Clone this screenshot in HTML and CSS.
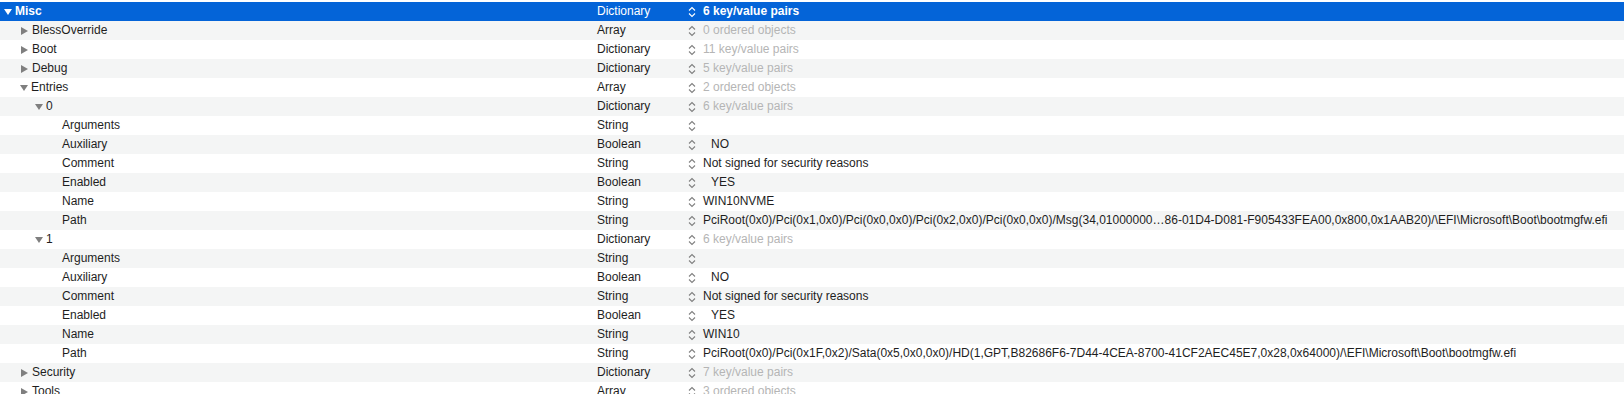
FILE: index.html
```html
<!DOCTYPE html>
<html lang="en">

<head>
    <meta charset="UTF-8">
    <title>config.plist - Misc</title>
    <link rel="stylesheet" href="styles.css">
</head>

<body>
    <div class="plist">
        <div class="row selected">
            <div class="key lvl-0"><span class="tri down"></span>Misc</div>
            <div class="type">Dictionary</div>
            <div class="stepper"><svg viewBox="0 0 8 12"><path d="M1 4.5 4 1.5 7 4.5M1 7.5 4 10.5 7 7.5"/></svg></div>
            <div class="value">6 key/value pairs</div>
        </div>
        <div class="row">
            <div class="key lvl-1"><span class="tri right"></span>BlessOverride</div>
            <div class="type">Array</div>
            <div class="stepper"><svg viewBox="0 0 8 12"><path d="M1 4.5 4 1.5 7 4.5M1 7.5 4 10.5 7 7.5"/></svg></div>
            <div class="value muted">0 ordered objects</div>
        </div>
        <div class="row">
            <div class="key lvl-1"><span class="tri right"></span>Boot</div>
            <div class="type">Dictionary</div>
            <div class="stepper"><svg viewBox="0 0 8 12"><path d="M1 4.5 4 1.5 7 4.5M1 7.5 4 10.5 7 7.5"/></svg></div>
            <div class="value muted">11 key/value pairs</div>
        </div>
        <div class="row">
            <div class="key lvl-1"><span class="tri right"></span>Debug</div>
            <div class="type">Dictionary</div>
            <div class="stepper"><svg viewBox="0 0 8 12"><path d="M1 4.5 4 1.5 7 4.5M1 7.5 4 10.5 7 7.5"/></svg></div>
            <div class="value muted">5 key/value pairs</div>
        </div>
        <div class="row">
            <div class="key lvl-1"><span class="tri down"></span>Entries</div>
            <div class="type">Array</div>
            <div class="stepper"><svg viewBox="0 0 8 12"><path d="M1 4.5 4 1.5 7 4.5M1 7.5 4 10.5 7 7.5"/></svg></div>
            <div class="value muted">2 ordered objects</div>
        </div>
        <div class="row">
            <div class="key lvl-2"><span class="tri down"></span>0</div>
            <div class="type">Dictionary</div>
            <div class="stepper"><svg viewBox="0 0 8 12"><path d="M1 4.5 4 1.5 7 4.5M1 7.5 4 10.5 7 7.5"/></svg></div>
            <div class="value muted">6 key/value pairs</div>
        </div>
        <div class="row">
            <div class="key lvl-3">Arguments</div>
            <div class="type">String</div>
            <div class="stepper"><svg viewBox="0 0 8 12"><path d="M1 4.5 4 1.5 7 4.5M1 7.5 4 10.5 7 7.5"/></svg></div>
            <div class="value"></div>
        </div>
        <div class="row">
            <div class="key lvl-3">Auxiliary</div>
            <div class="type">Boolean</div>
            <div class="stepper"><svg viewBox="0 0 8 12"><path d="M1 4.5 4 1.5 7 4.5M1 7.5 4 10.5 7 7.5"/></svg></div>
            <div class="value bool">NO</div>
        </div>
        <div class="row">
            <div class="key lvl-3">Comment</div>
            <div class="type">String</div>
            <div class="stepper"><svg viewBox="0 0 8 12"><path d="M1 4.5 4 1.5 7 4.5M1 7.5 4 10.5 7 7.5"/></svg></div>
            <div class="value">Not signed for security reasons</div>
        </div>
        <div class="row">
            <div class="key lvl-3">Enabled</div>
            <div class="type">Boolean</div>
            <div class="stepper"><svg viewBox="0 0 8 12"><path d="M1 4.5 4 1.5 7 4.5M1 7.5 4 10.5 7 7.5"/></svg></div>
            <div class="value bool">YES</div>
        </div>
        <div class="row">
            <div class="key lvl-3">Name</div>
            <div class="type">String</div>
            <div class="stepper"><svg viewBox="0 0 8 12"><path d="M1 4.5 4 1.5 7 4.5M1 7.5 4 10.5 7 7.5"/></svg></div>
            <div class="value">WIN10NVME</div>
        </div>
        <div class="row">
            <div class="key lvl-3">Path</div>
            <div class="type">String</div>
            <div class="stepper"><svg viewBox="0 0 8 12"><path d="M1 4.5 4 1.5 7 4.5M1 7.5 4 10.5 7 7.5"/></svg></div>
            <div class="value">PciRoot(0x0)/Pci(0x1,0x0)/Pci(0x0,0x0)/Pci(0x2,0x0)/Pci(0x0,0x0)/Msg(34,01000000…86-01D4-D081-F905433FEA00,0x800,0x1AAB20)/\EFI\Microsoft\Boot\bootmgfw.efi</div>
        </div>
        <div class="row">
            <div class="key lvl-2"><span class="tri down"></span>1</div>
            <div class="type">Dictionary</div>
            <div class="stepper"><svg viewBox="0 0 8 12"><path d="M1 4.5 4 1.5 7 4.5M1 7.5 4 10.5 7 7.5"/></svg></div>
            <div class="value muted">6 key/value pairs</div>
        </div>
        <div class="row">
            <div class="key lvl-3">Arguments</div>
            <div class="type">String</div>
            <div class="stepper"><svg viewBox="0 0 8 12"><path d="M1 4.5 4 1.5 7 4.5M1 7.5 4 10.5 7 7.5"/></svg></div>
            <div class="value"></div>
        </div>
        <div class="row">
            <div class="key lvl-3">Auxiliary</div>
            <div class="type">Boolean</div>
            <div class="stepper"><svg viewBox="0 0 8 12"><path d="M1 4.5 4 1.5 7 4.5M1 7.5 4 10.5 7 7.5"/></svg></div>
            <div class="value bool">NO</div>
        </div>
        <div class="row">
            <div class="key lvl-3">Comment</div>
            <div class="type">String</div>
            <div class="stepper"><svg viewBox="0 0 8 12"><path d="M1 4.5 4 1.5 7 4.5M1 7.5 4 10.5 7 7.5"/></svg></div>
            <div class="value">Not signed for security reasons</div>
        </div>
        <div class="row">
            <div class="key lvl-3">Enabled</div>
            <div class="type">Boolean</div>
            <div class="stepper"><svg viewBox="0 0 8 12"><path d="M1 4.5 4 1.5 7 4.5M1 7.5 4 10.5 7 7.5"/></svg></div>
            <div class="value bool">YES</div>
        </div>
        <div class="row">
            <div class="key lvl-3">Name</div>
            <div class="type">String</div>
            <div class="stepper"><svg viewBox="0 0 8 12"><path d="M1 4.5 4 1.5 7 4.5M1 7.5 4 10.5 7 7.5"/></svg></div>
            <div class="value">WIN10</div>
        </div>
        <div class="row">
            <div class="key lvl-3">Path</div>
            <div class="type">String</div>
            <div class="stepper"><svg viewBox="0 0 8 12"><path d="M1 4.5 4 1.5 7 4.5M1 7.5 4 10.5 7 7.5"/></svg></div>
            <div class="value">PciRoot(0x0)/Pci(0x1F,0x2)/Sata(0x5,0x0,0x0)/HD(1,GPT,B82686F6-7D44-4CEA-8700-41CF2AEC45E7,0x28,0x64000)/\EFI\Microsoft\Boot\bootmgfw.efi</div>
        </div>
        <div class="row">
            <div class="key lvl-1"><span class="tri right"></span>Security</div>
            <div class="type">Dictionary</div>
            <div class="stepper"><svg viewBox="0 0 8 12"><path d="M1 4.5 4 1.5 7 4.5M1 7.5 4 10.5 7 7.5"/></svg></div>
            <div class="value muted">7 key/value pairs</div>
        </div>
        <div class="row">
            <div class="key lvl-1"><span class="tri right"></span>Tools</div>
            <div class="type">Array</div>
            <div class="stepper"><svg viewBox="0 0 8 12"><path d="M1 4.5 4 1.5 7 4.5M1 7.5 4 10.5 7 7.5"/></svg></div>
            <div class="value muted">3 ordered objects</div>
        </div>
    </div>
</body>

</html>
```

FILE: styles.css
```css
* {
    box-sizing: border-box;
    padding: 0;
    margin: 0;
}

body {
    background-color: white;
    font-family: "Liberation Sans", Arial, Helvetica, sans-serif;
    font-size: 12px;
    color: #1e1e1e;
    overflow: hidden;
}

.plist {
    display: flex;
    flex-direction: column;
    padding-top: 2px;
}

.row {
    display: flex;
    align-items: center;
    height: 19px;
    line-height: 19px;
    white-space: nowrap;
}

.row:nth-child(even) {
    background-color: #f4f5f5;
}

.row.selected {
    background-color: #0464d8;
    color: white;
}

.key {
    display: flex;
    align-items: center;
    width: 597px;
    flex-shrink: 0;
}

.lvl-0 {
    padding-left: 4px;
}

.lvl-1 {
    padding-left: 20px;
}

.lvl-2 {
    padding-left: 35px;
}

.lvl-3 {
    padding-left: 62px;
}

.selected .key {
    font-weight: bold;
}

.tri {
    display: inline-block;
    width: 0;
    height: 0;
    margin-right: 1px;
}

.tri.right {
    border-left: 7px solid #7f7f7f;
    border-top: 4px solid transparent;
    border-bottom: 4px solid transparent;
    margin-right: 4px;
    margin-left: 1px;
}

.tri.down {
    border-top: 6px solid #7f7f7f;
    border-left: 4px solid transparent;
    border-right: 4px solid transparent;
    margin-right: 3px;
}

.selected .tri.down {
    border-top-color: white;
}

.type {
    width: 91px;
    flex-shrink: 0;
}

.stepper {
    display: flex;
    align-items: center;
    width: 15px;
    flex-shrink: 0;
}

.stepper svg {
    width: 8px;
    height: 12px;
    fill: none;
    stroke: #808080;
    stroke-width: 1.1;
}

.selected .stepper svg {
    stroke: white;
}

.value {
    flex: 1;
}

.selected .value {
    font-weight: bold;
}

.value.muted {
    color: #b5b5b5;
}

.value.bool {
    padding-left: 8px;
}
```
